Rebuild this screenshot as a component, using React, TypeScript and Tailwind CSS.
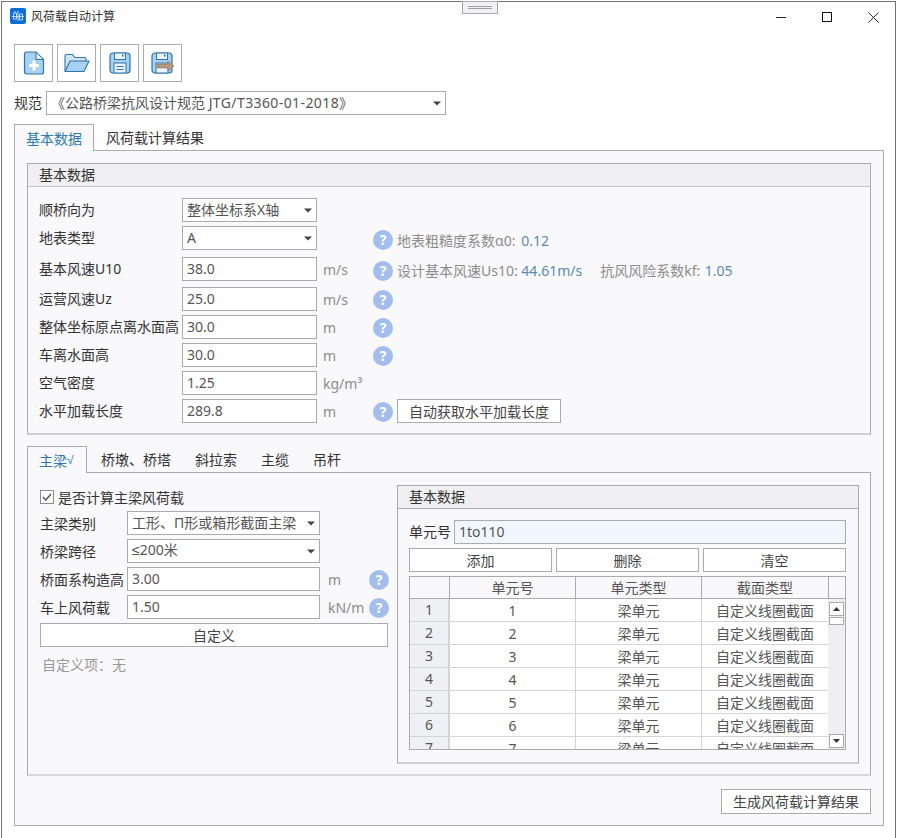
const FONT = "font-['Noto_Sans','Noto_Sans_CJK_SC',sans-serif]";

function Caret() {
  return (
    <svg width="8" height="5" viewBox="0 0 8 5" className="shrink-0">
      <path d="M0 0.500H8L4 4.500Z" fill="#444" />
    </svg>
  );
}

function Help({ className = "" }: { className?: string }) {
  return (
    <div className={`w-[20px] h-[20px] rounded-full bg-[#a3bdec] flex items-center justify-center text-white text-[14px] font-bold leading-none shrink-0 ${className}`}>
      ?
    </div>
  );
}

function Select({ value, className = "" }: { value: React.ReactNode; className?: string }) {
  return (
    <div className={`h-[24px] border border-[#ababab] bg-white flex items-center justify-between pl-[4px] pr-[4px] text-[14px] text-[#555] shrink-0 whitespace-nowrap ${className}`}>
      <span className="pb-[2px]">{value}</span>
      <Caret />
    </div>
  );
}

function Field({ value, className = "" }: { value: string; className?: string }) {
  return (
    <div className={`h-[24px] border border-[#ababab] bg-white flex items-center pl-[4px] pb-[2px] text-[14px] text-[#555] shrink-0 ${className}`}>
      {value}
    </div>
  );
}

function Btn({ label, className = "" }: { label: string; className?: string }) {
  return (
    <div className={`h-[24px] border border-[#ababab] bg-white flex items-center justify-center text-[14px] text-[#444] shrink-0 ${className}`}>
      {label}
    </div>
  );
}

function Row({
  label,
  className = "",
  children,
}: {
  label: string;
  className?: string;
  children: React.ReactNode;
}) {
  return (
    <div className={`h-[24px] flex items-center ${className}`}>
      <div className="w-[143px] pb-[2px] text-[14px] text-[#333] whitespace-nowrap shrink-0">{label}</div>
      {children}
    </div>
  );
}

function Unit({ text = "" }: { text?: string }) {
  return <div className="w-[50px] pl-[6px] text-[14px] text-[#8c8c8c] shrink-0 whitespace-nowrap">{text}</div>;
}

function SmallRow({
  label,
  className = "",
  children,
}: {
  label: string;
  className?: string;
  children: React.ReactNode;
}) {
  return (
    <div className={`h-[24px] flex items-center ${className}`}>
      <div className="w-[87px] text-[14px] text-[#333] whitespace-nowrap shrink-0">{label}</div>
      {children}
    </div>
  );
}

function ToolBtn({ children }: { children: React.ReactNode }) {
  return (
    <div className="w-[39px] h-[38px] border border-[#ababab] bg-white flex items-center justify-center">
      {children}
    </div>
  );
}

function NewIcon() {
  return (
    <svg width="22" height="24" viewBox="0 0 22 24">
      <path d="M1.500 3a2 2 0 0 1 2-2H13l7.500 7.500V21a2 2 0 0 1-2 2h-15a2 2 0 0 1-2-2Z" fill="#a8d0f0" stroke="#2f74a8" strokeWidth="1.200" />
      <path d="M13 1v7.500h7.500Z" fill="#e4f1fb" stroke="#2f74a8" strokeWidth="1" />
      <path d="M11 9.500v10M6 14.500h10" stroke="#fff" strokeWidth="3.200" />
    </svg>
  );
}

function FolderIcon() {
  return (
    <svg width="26" height="20" viewBox="0 0 26 20">
      <path d="M1 18V3a1.500 1.500 0 0 1 1.500-1.500h6L11 4.500h9.500A1.500 1.500 0 0 1 22 6v2" fill="#cfe4f6" stroke="#2f74a8" strokeWidth="1.100" />
      <path d="M1 18.500 6 8h19l-5 10.500Z" fill="#a8d0f0" stroke="#2f74a8" strokeWidth="1.100" strokeLinejoin="round" />
    </svg>
  );
}

function SaveIcon() {
  return (
    <svg width="22" height="22" viewBox="0 0 22 22">
      <rect x="1" y="1" width="20" height="20" rx="3" fill="#a8d0f0" stroke="#2f74a8" strokeWidth="1.200" />
      <rect x="5.500" y="1" width="11" height="6.500" fill="#eaf4fc" stroke="#2f74a8" strokeWidth="1" />
      <rect x="13" y="2.500" width="1.500" height="2" fill="#2f74a8" />
      <rect x="5" y="11" width="12" height="10" fill="#eaf4fc" stroke="#2f74a8" strokeWidth="1" />
      <path d="M7.500 14.500h7M7.500 17.500h7" stroke="#2f74a8" strokeWidth="1" />
    </svg>
  );
}

function SaveAsIcon() {
  return (
    <svg width="24" height="22" viewBox="0 0 24 22">
      <rect x="1" y="1" width="20" height="20" rx="3" fill="#a8d0f0" stroke="#2f74a8" strokeWidth="1.200" />
      <rect x="5.500" y="1" width="11" height="6.500" fill="#eaf4fc" stroke="#2f74a8" strokeWidth="1" />
      <rect x="13" y="2.500" width="1.500" height="2" fill="#2f74a8" />
      <rect x="5" y="11" width="12" height="10" fill="#eaf4fc" stroke="#2f74a8" strokeWidth="1" />
      <path d="M6 12h11V9l6 5-6 5v-3H6Z" fill="#b39a7e" stroke="#8a7660" strokeWidth="0.600" />
    </svg>
  );
}

function AppIcon() {
  return (
    <svg width="16" height="16" viewBox="0 0 16 16">
      <rect width="16" height="16" rx="2" fill="#0b6fd4" />
      <path d="M2 8.500h12M3.500 5h3v6h-3ZM5 3v2M9.500 6h3v6h-3ZM8 3v10" stroke="#cfe4fb" strokeWidth="0.900" fill="none" />
    </svg>
  );
}

function ScrollBtn({ up }: { up: boolean }) {
  return (
    <div className="w-[15px] h-[14px] border border-[#ababab] bg-white flex items-center justify-center shrink-0">
      <svg width="7" height="4" viewBox="0 0 7 4">
        <path d={up ? "M0 4H7L3.500 0Z" : "M0 0H7L3.500 4Z"} fill="#333" />
      </svg>
    </div>
  );
}

const rows = [1, 2, 3, 4, 5, 6, 7];

function GridTable() {
  return (
    <div className="mt-[4px] w-[437px] h-[174px] border border-[#ababab] flex overflow-hidden bg-white">
      <div className="w-[418px] h-full overflow-hidden shrink-0">
        <div className="h-[22px] flex bg-[#f8f7fa] border-b border-[#ababab] text-[14px] text-[#555]">
          <div className="w-[40px] border-r border-[#ababab]" />
          <div className="w-[126px] border-r border-[#ababab] flex items-center justify-center">单元号</div>
          <div className="w-[126px] border-r border-[#ababab] flex items-center justify-center">单元类型</div>
          <div className="w-[126px] flex items-center justify-center">截面类型</div>
        </div>
        {rows.map((n) => (
          <div key={n} className="h-[23px] flex border-b border-[#d4d4d4] text-[14px] text-[#555] shrink-0">
            <div className="w-[40px] bg-[#eff0f4] border-r-2 border-[#d4d4d4] flex items-center justify-center pb-[2px]">{n}</div>
            <div className="w-[126px] border-r border-[#d4d4d4] flex items-center justify-center">{n}</div>
            <div className="w-[126px] border-r border-[#d4d4d4] flex items-center justify-center">梁单元</div>
            <div className="w-[126px] flex items-center justify-center">自定义线圈截面</div>
          </div>
        ))}
      </div>
      <div className="flex-1 flex flex-col">
        <div className="h-[22px] bg-[#f8f7fa] border-b border-[#ababab] border-l shrink-0" />
        <div className="flex-1 bg-[#efeff2] flex flex-col items-center pt-[3px] pb-[1px]">
          <ScrollBtn up />
          <div className="w-[15px] h-[8px] mt-[1px] bg-white border border-[#ababab]" />
          <div className="flex-1" />
          <ScrollBtn up={false} />
        </div>
      </div>
    </div>
  );
}

export default function App() {
  return (
    <div className={`${FONT} w-[898px] h-[838px] bg-white pl-px pt-px overflow-hidden`}>
      <div className="relative w-[895px] h-[837px] border-l border-t border-r border-[#707070] bg-white">
        {/* grip over the title bar */}
        <div className="absolute left-[460px] -top-px w-[36px] h-[13px] bg-[#f0eff4] border border-[#ababab] flex flex-col items-center justify-center gap-[1px]">
          <div className="w-[24px] h-px bg-[#a0a0a0]" />
          <div className="w-[24px] h-px bg-[#a0a0a0]" />
        </div>

        {/* title bar */}
        <div className="h-[42px] flex items-start pl-[8px] pt-[6px]">
          <AppIcon />
          <div className="ml-[5px] mt-[1px] text-[12px] leading-[16px] text-[#333]">风荷载自动计算</div>
          <div className="flex-1" />
          <div className="flex items-center h-[16px] mt-[1px]">
            <svg width="10" height="10" viewBox="0 0 10 10">
              <path d="M0 5.500H10" stroke="#222" strokeWidth="1" />
            </svg>
            <svg width="10" height="10" viewBox="0 0 10 10" className="ml-[36px]">
              <rect x="0.500" y="0.500" width="9" height="9" fill="none" stroke="#111" strokeWidth="1" />
            </svg>
            <svg width="11" height="11" viewBox="0 0 11 11" className="ml-[36px] mr-[16px]">
              <path d="M0.500 0.500L10.500 10.500M10.500 0.500L0.500 10.500" stroke="#222" strokeWidth="1" />
            </svg>
          </div>
        </div>

        <div className="pl-[12px]">
          {/* toolbar */}
          <div className="flex gap-[4px]">
            <ToolBtn><NewIcon /></ToolBtn>
            <ToolBtn><FolderIcon /></ToolBtn>
            <ToolBtn><SaveIcon /></ToolBtn>
            <ToolBtn><SaveAsIcon /></ToolBtn>
          </div>

          {/* code selector */}
          <div className="mt-[9px] flex items-center">
            <div className="w-[32px] pb-[2px] text-[14px] text-[#333]">规范</div>
            <Select
              value={
                <>
                  《公路桥梁抗风设计规范 <span className="tracking-[0.4px]">JTG/T3360-01-2018</span>》
                </>
              }
              className="w-[400px]"
            />
          </div>

          {/* outer tabs */}
          <div className="mt-[9px] flex h-[27px] text-[14px]">
            <div className="relative z-10 w-[80px] h-[27px] border border-b-0 border-[#ababab] bg-[#f9f8fb] flex items-center justify-center text-[#2a7ab0]">基本数据</div>
            <div className="px-[12px] h-[26px] flex items-center text-[#333]">风荷载计算结果</div>
          </div>

          <div className="-mt-px w-[870px] h-[676px] border border-[#ababab] bg-[#f9f8fb] pl-[12px] pt-[12px]">
            {/* basic data group */}
            <div className="w-[844px] h-[272px] border border-[#ababab] border-b-2 border-b-[#d0d0d0]">
              <div className="h-[23px] bg-[#f0eff2] border-b border-[#c4c4c4] flex items-center pl-[11px] pb-[2px] text-[14px] text-[#333]">基本数据</div>
              <div className="pl-[11px] pt-[11px]">
                <Row label="顺桥向为">
                  <Select value="整体坐标系X轴" className="w-[135px]" />
                </Row>
                <Row label="地表类型" className="mt-[4px]">
                  <Select value="A" className="w-[135px]" />
                  <Unit />
                  <Help className="mt-[4px] ml-[6px]" />
                  <div className="ml-[4px] mt-[4px] text-[14px] text-[#8c8c8c] whitespace-nowrap">
                    地表粗糙度系数α0: <span className="ml-[2px] text-[#5b8ab5]">0.12</span>
                  </div>
                </Row>
                <Row label="基本风速U10" className="mt-[7px]">
                  <Field value="38.0" className="w-[135px]" />
                  <Unit text="m/s" />
                  <Help className="mt-[3px] ml-[6px]" />
                  <div className="ml-[4px] mt-[3px] text-[14px] text-[#8c8c8c] whitespace-nowrap">
                    设计基本风速Us10: <span className="text-[#5b8ab5]">44.61m/s</span>
                    <span className="ml-[18px]">抗风风险系数kf: </span>
                    <span className="ml-[1px] text-[#5b8ab5]">1.05</span>
                  </div>
                </Row>
                <Row label="运营风速Uz" className="mt-[6px]">
                  <Field value="25.0" className="w-[135px]" />
                  <Unit text="m/s" />
                  <Help className="mt-[2px] ml-[6px]" />
                </Row>
                <Row label="整体坐标原点离水面高" className="mt-[4px]">
                  <Field value="30.0" className="w-[135px]" />
                  <Unit text="m" />
                  <Help className="mt-[2px] ml-[6px]" />
                </Row>
                <Row label="车离水面高" className="mt-[4px]">
                  <Field value="30.0" className="w-[135px]" />
                  <Unit text="m" />
                  <Help className="mt-[2px] ml-[6px]" />
                </Row>
                <Row label="空气密度" className="mt-[4px]">
                  <Field value="1.25" className="w-[135px]" />
                  <Unit text="kg/m³" />
                </Row>
                <Row label="水平加载长度" className="mt-[4px]">
                  <Field value="289.8" className="w-[135px]" />
                  <Unit text="m" />
                  <Help className="mt-[2px] ml-[6px]" />
                  <Btn label="自动获取水平加载长度" className="ml-[4px] w-[164px]" />
                </Row>
              </div>
            </div>

            {/* member tabs */}
            <div className="mt-[11px] flex h-[27px] text-[14px] text-[#333]">
              <div className="relative z-10 w-[60px] h-[27px] border border-b-0 border-[#ababab] bg-[#f9f8fb] flex items-center pl-[11px] text-[#2a7ab0]">
                主梁<span className="font-['Liberation_Sans',sans-serif] text-[12px]">√</span>
              </div>
              <div className="ml-[2px] px-[12px] h-[26px] flex items-center">桥墩、桥塔</div>
              <div className="px-[12px] h-[26px] flex items-center">斜拉索</div>
              <div className="px-[12px] h-[26px] flex items-center">主缆</div>
              <div className="px-[12px] h-[26px] flex items-center">吊杆</div>
            </div>

            <div className="-mt-px w-[844px] h-[304px] border border-[#ababab] border-b-2 border-b-[#d8d8d8] flex pl-[12px] pt-[12px]">
              {/* left column */}
              <div className="w-[357px] shrink-0">
                <div className="h-[24px] flex items-center text-[14px] text-[#333]">
                  <div className="w-[14px] h-[14px] border border-[#8c8c8c] bg-white flex items-center justify-center">
                    <svg width="10" height="8" viewBox="0 0 10 8">
                      <path d="M1 4L3.800 7L9 1" fill="none" stroke="#444" strokeWidth="1.200" />
                    </svg>
                  </div>
                  <span className="ml-[4px]">是否计算主梁风荷载</span>
                </div>
                <SmallRow label="主梁类别" className="mt-[2px]">
                  <Select value="工形、Π形或箱形截面主梁" className="w-[193px]" />
                </SmallRow>
                <SmallRow label="桥梁跨径" className="mt-[4px]">
                  <Select
                    value={
                      <>
                        <span className="font-['Liberation_Sans',sans-serif]">≤</span>200米
                      </>
                    }
                    className="w-[193px]"
                  />
                </SmallRow>
                <SmallRow label="桥面系构造高" className="mt-[4px]">
                  <Field value="3.00" className="w-[193px]" />
                  <div className="w-[49px] pl-[8px] text-[14px] text-[#8c8c8c]">m</div>
                  <Help className="mt-[2px]" />
                </SmallRow>
                <SmallRow label="车上风荷载" className="mt-[4px]">
                  <Field value="1.50" className="w-[193px]" />
                  <div className="w-[49px] pl-[8px] text-[14px] text-[#8c8c8c] whitespace-nowrap">kN/m</div>
                  <Help className="mt-[2px]" />
                </SmallRow>
                <Btn label="自定义" className="mt-[4px] w-[348px]" />
                <div className="mt-[7px] pl-[2px] text-[14px] text-[#999]">自定义项：无</div>
              </div>

              {/* right group */}
              <div className="w-[462px] h-[279px] border border-[#ababab] border-b-2 border-b-[#cfcfcf] shrink-0">
                <div className="h-[23px] bg-[#f0eff2] border-b border-[#ababab] flex items-center pl-[11px] pb-[2px] text-[14px] text-[#333]">基本数据</div>
                <div className="pl-[11px] pt-[11px]">
                  <div className="flex items-center h-[24px]">
                    <div className="w-[45px] pb-[2px] text-[14px] text-[#333] whitespace-nowrap">单元号</div>
                    <Field value="1to110" className="w-[392px] !bg-[#f0f6fe]" />
                  </div>
                  <div className="mt-[4px] flex gap-[4px]">
                    <Btn label="添加" className="w-[143px]" />
                    <Btn label="删除" className="w-[143px]" />
                    <Btn label="清空" className="w-[143px]" />
                  </div>
                  <GridTable />
                </div>
              </div>
            </div>

            <div className="mt-[13px] w-[844px] flex justify-end">
              <Btn label="生成风荷载计算结果" className="w-[150px] !h-[25px]" />
            </div>
          </div>
        </div>
      </div>
    </div>
  );
}
